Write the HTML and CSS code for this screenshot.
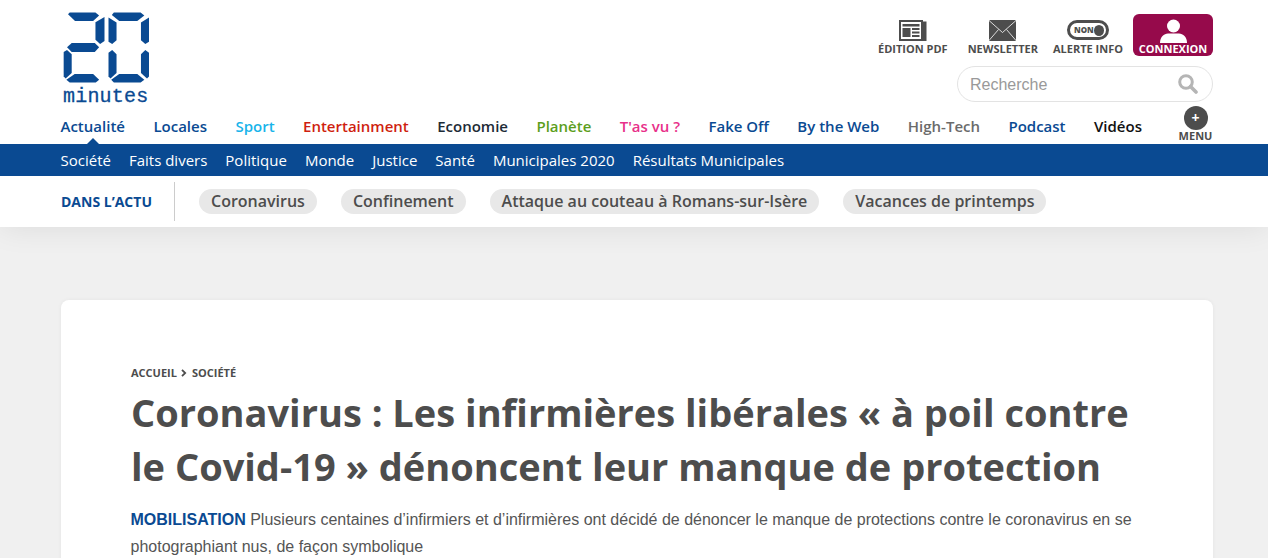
FILE: index.html
```html
<!DOCTYPE html>
<html lang="fr">
<head>
  <meta charset="utf-8">
  <title>Coronavirus : Les infirmières libérales « à poil contre le Covid-19 »</title>
  <link rel="stylesheet" href="styles.css">
</head>
<body>
  <header class="site-header">
    <div class="wrap top-row">
      <a class="logo" href="#">
        <svg class="logo-digits" viewBox="40 36 260 211" width="87" height="71">
          <g fill="#0a4a92">
            <!-- 2 -->
            <polygon points="60,37 137,37 148,46 130,62 76,62 55,42"/>
            <polygon points="164,50 164,122 151,131 137,118 137,66"/>
            <polygon points="66,128 135,128 148,141 135,155 66,155 52,141"/>
            <polygon points="42,155 52,149 66,162 66,218 48,234 42,228"/>
            <polygon points="75,221 130,221 148,238 138,246 60,246 50,238"/>
            <!-- 0 -->
            <polygon points="192,37 272,37 283,46 262,62 208,62 186,44"/>
            <polygon points="176,52 200,67 200,120 187,131 176,124"/>
            <polygon points="297,52 297,124 286,131 273,120 273,67"/>
            <polygon points="176,157 187,149 200,162 200,218 182,234 176,228"/>
            <polygon points="286,149 297,157 297,228 291,234 273,218 273,162"/>
            <polygon points="208,221 262,221 283,238 272,246 192,246 184,238"/>
          </g>
        </svg>
        <span class="logo-word">minutes</span>
      </a>
      <div class="tools">
        <ul class="tool-list">
          <li class="tool tool-pdf">
            <svg viewBox="0 0 28 21" width="28" height="21">
              <path fill="#4d4d4d" d="M0 0h24v1.500h3.500V21H0z"/>
              <path fill="#fff" d="M2 2h20v17H2z"/>
              <path fill="#4d4d4d" d="M3.500 4h17v2.500h-17zM3.500 8h8v9h-8zM13 8h7.500v2H13zM13 11.500h7.500v2H13zM13 15h7.500v2H13z"/>
            </svg>
            <span>Édition PDF</span>
          </li>
          <li class="tool tool-news">
            <svg viewBox="0 0 27 21" width="27" height="21">
              <rect width="27" height="21" rx="1" fill="#4d4d4d"/>
              <path fill="none" stroke="#fff" stroke-width=".8" d="M0 .5l13.500 12L27 .5M0 20.500l9.500-11M27 20.500l-9.500-11"/>
            </svg>
            <span>Newsletter</span>
          </li>
          <li class="tool tool-alert">
            <div class="toggle"><b>NON</b><i></i></div>
            <span>Alerte info</span>
          </li>
          <li class="tool tool-login">
            <svg viewBox="0 0 27 24" width="27" height="24">
              <circle cx="13.500" cy="7" r="6.500" fill="#fff"/>
              <path fill="#fff" d="M0 24c0-6 4-9.500 8-9.500h11c4 0 8 3.500 8 9.500z"/>
            </svg>
            <span>Connexion</span>
          </li>
        </ul>
        <div class="search">
          <span class="search-label">Recherche</span>
          <svg viewBox="0 0 20 20" width="20" height="20">
            <circle cx="8" cy="8" r="6.300" fill="none" stroke="#b5b5b5" stroke-width="3"/>
            <path d="M12.500 12.500L18 18" stroke="#b5b5b5" stroke-width="3.600" stroke-linecap="round"/>
          </svg>
        </div>
      </div>
    </div>

    <nav class="wrap main-nav">
      <a class="nav-blue current" href="#">Actualité</a>
      <a class="nav-blue" href="#">Locales</a>
      <a class="nav-sport" href="#">Sport</a>
      <a class="nav-ent" href="#">Entertainment</a>
      <a class="nav-eco" href="#">Economie</a>
      <a class="nav-planet" href="#">Planète</a>
      <a class="nav-tasvu" href="#">T'as vu ?</a>
      <a class="nav-blue" href="#">Fake Off</a>
      <a class="nav-blue" href="#">By the Web</a>
      <a class="nav-tech" href="#">High-Tech</a>
      <a class="nav-blue" href="#">Podcast</a>
      <a class="nav-video" href="#">Vidéos</a>
      <div class="menu-btn">
        <span class="menu-dot">+</span>
        <span class="menu-label">Menu</span>
      </div>
    </nav>

    <div class="sub-bar">
      <nav class="wrap sub-nav">
        <a href="#">Société</a>
        <a href="#">Faits divers</a>
        <a href="#">Politique</a>
        <a href="#">Monde</a>
        <a href="#">Justice</a>
        <a href="#">Santé</a>
        <a href="#">Municipales 2020</a>
        <a href="#">Résultats Municipales</a>
      </nav>
    </div>

    <div class="wrap actu-row">
      <strong class="actu-title">Dans l’actu</strong>
      <div class="actu-tags">
        <a href="#">Coronavirus</a>
        <a href="#">Confinement</a>
        <a href="#">Attaque au couteau à Romans-sur-Isère</a>
        <a href="#">Vacances de printemps</a>
      </div>
    </div>
  </header>

  <main class="wrap">
    <article class="card">
      <div class="crumbs">
        <a href="#">Accueil</a>
        <svg viewBox="0 0 6 8" width="6" height="8"><path d="M1 .8L4.200 4 1 7.200" fill="none" stroke="#4d4d4d" stroke-width="1.800"/></svg>
        <a href="#">Société</a>
      </div>
      <h1>Coronavirus : Les infirmières libérales « à poil contre le Covid-19 » dénoncent leur manque de protection</h1>
      <p class="lead"><strong>Mobilisation</strong> Plusieurs centaines d’infirmiers et d’infirmières ont décidé de dénoncer le manque de protections contre le coronavirus en se photographiant nus, de façon symbolique</p>
    </article>
  </main>
</body>
</html>
```

FILE: styles.css
```css
* {
  box-sizing: border-box;
}
html, body {
  margin: 0;
  padding: 0;
}
body {
  background-color: #f0f0f0;
  font-family: "Open Sans", Arial, sans-serif;
  color: #4d4d4d;
  overflow-x: hidden;
}
a {
  color: inherit;
  text-decoration: none;
}
.wrap {
  width: 1152px;
  margin-left: 61px;
}

/* header */
.site-header {
  background-color: #fff;
  box-shadow: 0 0 30px rgba(0, 0, 0, 0.09);
}
.top-row {
  display: flex;
  justify-content: space-between;
  height: 106px;
  padding-top: 12px;
}
.logo {
  display: block;
  width: 90px;
  margin-left: 2px;
}
.logo-digits {
  display: block;
}
.logo-word {
  display: block;
  margin-top: 4px;
  font-family: "Liberation Mono", monospace;
  font-size: 20px;
  line-height: 19px;
  letter-spacing: 0.2px;
  color: #0a4a92;
  -webkit-text-stroke: 0.3px #0a4a92;
}
.tools {
  display: flex;
  flex-direction: column;
  align-items: flex-end;
}
.tool-list {
  display: flex;
  align-items: flex-end;
  margin: 2px 0 0;
  padding: 0;
  list-style: none;
}
.tool {
  display: flex;
  flex-direction: column;
  align-items: center;
  font-size: 11px;
  font-weight: 700;
  line-height: 14px;
  text-transform: uppercase;
  color: #4d4d4d;
  white-space: nowrap;
}
.tool svg {
  display: block;
}
.tool-pdf {
  margin-right: 20px;
}
.tool-pdf svg,
.tool-news svg {
  margin-bottom: 1px;
}
.tool-news {
  margin-right: 15px;
}
.tool-alert {
  margin-right: 10px;
}
.toggle {
  display: flex;
  align-items: center;
  justify-content: space-between;
  width: 42px;
  height: 20px;
  margin-bottom: 2px;
  padding: 0 2px 0 4px;
  border: 3px solid #4d4d4d;
  border-radius: 10px;
}
.toggle b {
  font-size: 8px;
  line-height: 1;
}
.toggle i {
  width: 11px;
  height: 11px;
  border-radius: 50%;
  background-color: #4d4d4d;
}
.tool-login {
  justify-content: flex-end;
  width: 80px;
  height: 42px;
  border-radius: 6px;
  background-color: #960a4b;
  color: #fff;
}
.tool-login svg {
  margin-bottom: -1px;
}
.search {
  display: flex;
  align-items: center;
  justify-content: space-between;
  width: 256px;
  height: 36px;
  margin-top: 10px;
  padding: 0 14px 0 12px;
  border: 1px solid #e3e3e3;
  border-radius: 18px;
  background-color: #fff;
}
.search-label {
  position: relative;
  top: 1px;
  font-family: "Liberation Sans", Arial, sans-serif;
  font-size: 16px;
  color: #999;
}

.main-nav {
  display: flex;
  align-items: flex-end;
  gap: 28.450px;
  height: 38px;
  margin-left: 60.500px;
  padding-bottom: 8px;
  font-size: 15px;
  font-weight: 600;
  line-height: 20px;
}
.nav-blue { color: #0a4a92; }
.nav-sport { color: #19b4ea; }
.nav-ent { color: #cf1f10; }
.nav-eco { color: #1d2b36; }
.nav-planet { color: #5c9e1c; }
.nav-tasvu { color: #e8308a; }
.nav-tech { color: #6b6b6b; }
.nav-video { color: #111; }
.main-nav .current {
  position: relative;
}
.main-nav .current::after {
  content: "";
  position: absolute;
  left: 50%;
  bottom: -8px;
  margin-left: -6px;
  border: 6px solid transparent;
  border-top: 0;
  border-bottom-color: #0a4a92;
}
.menu-btn {
  display: flex;
  flex-direction: column;
  align-items: center;
  margin-left: auto;
  margin-bottom: -6px;
  width: 36px;
  margin-right: -1px;
}
.menu-dot {
  width: 24px;
  height: 24px;
  border-radius: 50%;
  background-color: #4d4d4d;
  color: #fff;
  font-size: 14px;
  font-weight: 700;
  line-height: 23px;
  text-align: center;
}
.menu-label {
  font-size: 11px;
  font-weight: 700;
  line-height: 12px;
  text-transform: uppercase;
}

.sub-bar {
  background-color: #0a4a92;
}
.sub-nav {
  display: flex;
  gap: 18px;
  height: 32px;
  margin-left: 60.500px;
  align-items: center;
  font-size: 15px;
  color: #fff;
}

.actu-row {
  display: flex;
  align-items: center;
  height: 51px;
}
.actu-title {
  display: flex;
  align-items: center;
  width: 114px;
  height: 39px;
  border-right: 1px solid #ccc;
  font-size: 14px;
  font-weight: 700;
  text-transform: uppercase;
  color: #0a4a92;
}
.actu-tags {
  display: flex;
  gap: 24px;
  margin-left: 24px;
}
.actu-tags a {
  height: 25px;
  padding: 0 12px;
  border-radius: 13px;
  background-color: #e8e8e8;
  font-size: 16px;
  font-weight: 600;
  line-height: 24px;
  color: #4d4d4d;
}

/* article */
.card {
  margin-top: 73px;
  margin-bottom: 40px;
  padding: 61px 70px 40px;
  border-radius: 8px;
  background-color: #fff;
  box-shadow: 0 0 4px rgba(0, 0, 0, 0.05);
}
.crumbs {
  display: flex;
  align-items: center;
  gap: 4.500px;
  font-size: 11px;
  font-weight: 700;
  line-height: 24px;
  text-transform: uppercase;
}
.card h1 {
  margin: 0;
  font-size: 38px;
  font-weight: 700;
  line-height: 54px;
  color: #4d4d4d;
}
.lead {
  margin: 13px 0 0 -0.500px;
  font-family: "Liberation Sans", Arial, sans-serif;
  font-size: 16px;
  line-height: 27px;
  color: #555;
}
.lead strong {
  text-transform: uppercase;
  color: #0a4a92;
}
```
